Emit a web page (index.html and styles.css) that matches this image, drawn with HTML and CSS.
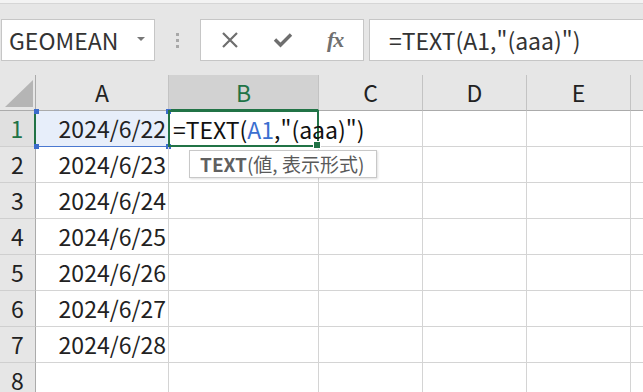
FILE: index.html
```html
<!DOCTYPE html>
<html lang="ja">

<head>
    <meta charset="UTF-8">
    <title>TEXT関数</title>
    <link rel="stylesheet" href="styles.css">
</head>

<body>
    <div id="app">
        <div class="top-strip"></div>
        <div class="formula-row">
            <div class="name-box">
                <span class="name">GEOMEAN</span>
                <span class="drop"></span>
            </div>
            <div class="grip">
                <span></span><span></span><span></span>
            </div>
            <div class="fx-buttons">
                <svg class="btn" width="18" height="18" viewBox="0 0 18 18">
                    <path d="M2 2 L16 16 M16 2 L2 16" stroke="#6e6e6e" stroke-width="2.2" fill="none" />
                </svg>
                <svg class="btn" width="20" height="18" viewBox="0 0 20 18">
                    <path d="M2 8.5 L7.5 14 L18 3.5" stroke="#6e6e6e" stroke-width="3.4" fill="none" />
                </svg>
                <span class="fx">fx</span>
            </div>
            <div class="formula-box">=TEXT(A1,"(aaa)")</div>
        </div>

        <div class="sheet">
            <div class="grid">
                <div class="corner">
                    <svg width="36" height="35" viewBox="0 0 36 35">
                        <polygon points="5,32 33,32 33,5" fill="#b5b5b5" />
                    </svg>
                </div>
                <div class="col-head">A</div>
                <div class="col-head sel">B</div>
                <div class="col-head">C</div>
                <div class="col-head">D</div>
                <div class="col-head">E</div>
                <div class="col-head last"></div>

                <div class="row-head sel">1</div>
                <div class="cell date ref">2024/6/22
                    <i class="knob tl"></i><i class="knob tr"></i><i class="knob bl"></i><i class="knob br"></i>
                </div>
                <div class="cell active">
                    <span class="edit">=TEXT(<span class="ref-text">A1</span>,"(aaa)")</span>
                    <i class="handle"></i>
                </div>
                <div class="cell"></div>
                <div class="cell"></div>
                <div class="cell"></div>
                <div class="cell last"></div>

                <div class="row-head">2</div>
                <div class="cell date">2024/6/23</div>
                <div class="cell"></div>
                <div class="cell"></div>
                <div class="cell"></div>
                <div class="cell"></div>
                <div class="cell last"></div>

                <div class="row-head">3</div>
                <div class="cell date">2024/6/24</div>
                <div class="cell"></div>
                <div class="cell"></div>
                <div class="cell"></div>
                <div class="cell"></div>
                <div class="cell last"></div>

                <div class="row-head">4</div>
                <div class="cell date">2024/6/25</div>
                <div class="cell"></div>
                <div class="cell"></div>
                <div class="cell"></div>
                <div class="cell"></div>
                <div class="cell last"></div>

                <div class="row-head">5</div>
                <div class="cell date">2024/6/26</div>
                <div class="cell"></div>
                <div class="cell"></div>
                <div class="cell"></div>
                <div class="cell"></div>
                <div class="cell last"></div>

                <div class="row-head">6</div>
                <div class="cell date">2024/6/27</div>
                <div class="cell"></div>
                <div class="cell"></div>
                <div class="cell"></div>
                <div class="cell"></div>
                <div class="cell last"></div>

                <div class="row-head">7</div>
                <div class="cell date">2024/6/28</div>
                <div class="cell"></div>
                <div class="cell"></div>
                <div class="cell"></div>
                <div class="cell"></div>
                <div class="cell last"></div>

                <div class="row-head">8</div>
                <div class="cell"></div>
                <div class="cell"></div>
                <div class="cell"></div>
                <div class="cell"></div>
                <div class="cell"></div>
                <div class="cell last"></div>
            </div>

            <div class="tooltip"><b>TEXT</b>(値, 表示形式)</div>
        </div>
    </div>
</body>

</html>
```

FILE: styles.css
```css
body {
    margin: 0;
    font-family: "Noto Sans CJK JP", "Noto Sans", sans-serif;
    color: #222;
}

#app {
    width: 643px;
    height: 392px;
    overflow: hidden;
    background-color: #e6e6e6;
}

.top-strip {
    height: 3px;
    background-color: #f3f3f3;
    border-bottom: 1px solid #d6d6d6;
}

.formula-row {
    display: flex;
    align-items: center;
    height: 42px;
    padding: 15px 0 14px 1px;
}

.name-box {
    box-sizing: border-box;
    width: 154px;
    height: 42px;
    background-color: #fff;
    border: 1px solid #c6c6c6;
    display: flex;
    align-items: center;
    padding-left: 7px;
}

.name {
    font-size: 23px;
    color: #333;
    flex: 1;
    line-height: 1;
}

.drop {
    width: 0;
    height: 0;
    border-left: 4px solid transparent;
    border-right: 4px solid transparent;
    border-top: 4px solid #777;
    margin-right: 9px;
    margin-top: -2px;
}

.grip {
    width: 45px;
    display: flex;
    flex-direction: column;
    align-items: center;
    gap: 3px;
}

.grip span {
    width: 3px;
    height: 3px;
    background-color: #a8a8a8;
}

.fx-buttons {
    box-sizing: border-box;
    width: 164px;
    height: 42px;
    background-color: #fff;
    border: 1px solid #c6c6c6;
    display: flex;
    align-items: center;
    padding-left: 20px;
}

.fx-buttons .btn {
    margin-right: 34px;
}

.fx {
    font-family: "Liberation Serif", serif;
    font-style: italic;
    font-weight: bold;
    font-size: 22px;
    color: #707070;
    letter-spacing: -1px;
}

.formula-box {
    box-sizing: border-box;
    flex: 1;
    height: 42px;
    margin-left: 5px;
    background-color: #fff;
    border: 1px solid #c6c6c6;
    border-right: none;
    padding-left: 19px;
    font-size: 23px;
    line-height: 40px;
    color: #333;
}

.sheet {
    position: relative;
}

.grid {
    display: grid;
    grid-template-columns: 36px 133px 150px 104px 104px 104px 12px;
    grid-auto-rows: 36px;
    background-color: #fff;
}

.corner {
    box-sizing: border-box;
    background-color: #e6e6e6;
    border-right: 1px solid #ababab;
    border-bottom: 1px solid #ababab;
}

.corner svg {
    display: block;
}

.col-head {
    box-sizing: border-box;
    background-color: #e6e6e6;
    border-right: 1px solid #c3c3c3;
    border-bottom: 1px solid #ababab;
    text-align: center;
    font-size: 23px;
    line-height: 35px;
}

.col-head.sel {
    background-color: #d2d2d2;
    color: #217346;
    border-bottom: 2px solid #217346;
}

.row-head {
    box-sizing: border-box;
    background-color: #e6e6e6;
    border-right: 1px solid #ababab;
    border-bottom: 1px solid #cfcfcf;
    text-align: center;
    font-size: 23px;
    line-height: 35px;
}

.row-head.sel {
    color: #217346;
    background-color: #e0e0e0;
    border-right: 2px solid #217346;
}

.cell {
    box-sizing: border-box;
    position: relative;
    border-right: 1px solid #d4d4d4;
    border-bottom: 1px solid #d4d4d4;
    font-size: 23px;
    line-height: 35px;
}

.last {
    border-right: none;
}

.date {
    text-align: right;
    padding-right: 2px;
}

.ref {
    background-color: #e7eefa;
    border-bottom: 1px solid #4a78d0;
    border-right: 1px solid #4a78d0;
}

.knob {
    position: absolute;
    width: 5px;
    height: 5px;
    background-color: #3c6ccc;
}

.knob.tl { left: -2px; top: -2px; }
.knob.tr { right: -3px; top: -2px; }
.knob.bl { left: -2px; bottom: -3px; }
.knob.br { right: -3px; bottom: -3px; }

.active {
    z-index: 2;
    border: 2px solid #217346;
    margin-top: -1px;
    height: 37px;
    margin-left: -1px;
}

.edit {
    position: absolute;
    left: 3px;
    top: 0;
    white-space: nowrap;
    line-height: 34px;
    color: #111;
}

.ref-text {
    color: #3b6fd0;
}

.handle {
    position: absolute;
    right: -4px;
    bottom: -4px;
    width: 6px;
    height: 6px;
    background-color: #217346;
    border: 1px solid #fff;
}

.tooltip {
    position: absolute;
    left: 189px;
    top: 75px;
    box-sizing: border-box;
    width: 188px;
    height: 28px;
    background-color: #fff;
    border: 1px solid #c8c8c8;
    box-shadow: 1px 1px 2px rgba(0, 0, 0, 0.12);
    z-index: 3;
    padding-left: 10px;
    font-size: 19px;
    line-height: 26px;
    color: #5a5a5a;
    white-space: nowrap;
}

.tooltip b {
    color: #606060;
}
```
